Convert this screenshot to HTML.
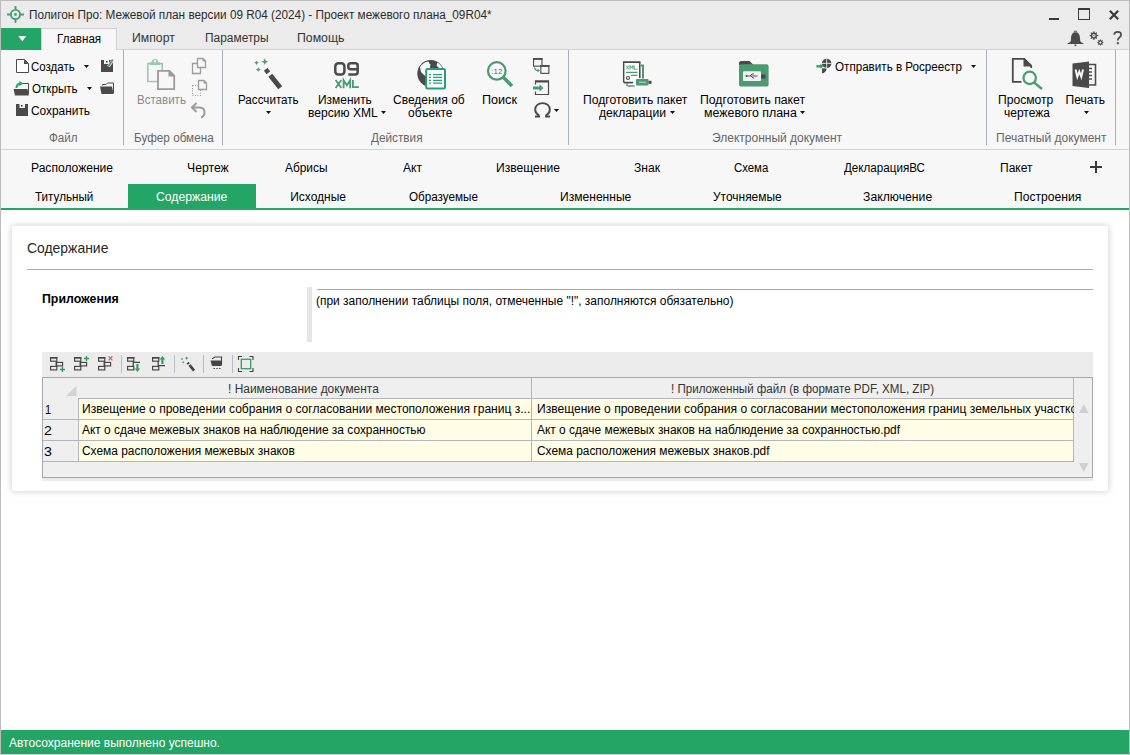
<!DOCTYPE html>
<html><head><meta charset="utf-8">
<style>
*{margin:0;padding:0;box-sizing:border-box}
html,body{width:1130px;height:755px;overflow:hidden;background:#fff}
body{position:relative;font-family:"Liberation Sans",sans-serif;color:#222}
.a{position:absolute}
.t{position:absolute;white-space:nowrap;line-height:1;transform-origin:0 0}
svg{position:absolute;overflow:visible}
.sep{position:absolute;width:1px;background:#aaaeb6;top:50px;height:95px}
</style></head><body>
<!-- title bar -->
<div class="a" style="left:0;top:0;width:1130px;height:49px;background:#ebebeb"></div>
<!-- ribbon body -->
<div class="a" style="left:0;top:49px;width:1130px;height:101px;background:#f7f7f7;border-top:1px solid #d2d2d2;border-bottom:1px solid #d2d2d2"></div>
<!-- nav -->
<div class="a" style="left:0;top:150px;width:1130px;height:58px;background:#f7f7f7"></div>
<div class="a" style="left:128px;top:184px;width:128px;height:24px;background:#23a566"></div>
<div class="a" style="left:0;top:208px;width:1130px;height:2px;background:#23a566"></div>
<!-- status -->
<div class="a" style="left:0;top:730px;width:1130px;height:24px;background:#23a566"></div>
<div class="a" style="left:0;top:754px;width:1130px;height:1px;background:#d6d0d3"></div>

<!-- tab row -->
<div class="a" style="left:1px;top:28px;width:40px;height:22px;background:#23a566"></div>
<svg style="left:18px;top:36px" width="9" height="6"><path d="M0.3 0H8.3L4.3 5.2Z" fill="#fff"/></svg>
<div class="a" style="left:41px;top:28px;width:76px;height:22px;background:#f7f7f7;border:1px solid #d2d2d2;border-bottom:none"></div>

<!-- app icon -->
<svg style="left:7px;top:6px" width="17" height="17" viewBox="0 0 17 17">
 <circle cx="8.5" cy="8.5" r="4.6" fill="none" stroke="#4a9a72" stroke-width="1.8"/>
 <circle cx="8.5" cy="8.5" r="1.4" fill="#4a9a72"/>
 <path d="M8.5 0V4M8.5 13V17M0 8.5H4M13 8.5H17" stroke="#4a9a72" stroke-width="1.8"/>
</svg>
<!-- window controls -->
<div class="a" style="left:1049px;top:18px;width:10px;height:2px;background:#3a3a3a"></div>
<div class="a" style="left:1078px;top:8px;width:12px;height:12px;border:1px solid #3a3a3a;border-top-width:2px"></div>
<svg style="left:1109px;top:10px" width="10" height="10"><path d="M0.8 0.8L9.2 9.2M9.2 0.8L0.8 9.2" stroke="#3a3a3a" stroke-width="2.2"/></svg>
<!-- bell gear help -->
<svg style="left:1067px;top:30px" width="17" height="17" viewBox="0 0 17 17"><path d="M8.5 2.2C5.6 2.2 4.3 4.3 4.1 7.2L3.8 10.8C3.6 12 2.6 12.6 0.6 13.2V14H16.4V13.2C14.4 12.6 13.4 12 13.2 10.8L12.9 7.2C12.7 4.3 11.4 2.2 8.5 2.2Z" fill="#4a4a4a"/><rect x="7.6" y="14.5" width="1.8" height="1.6" fill="#4a4a4a"/><path d="M7.4 2.3V1.2H9.6V2.3" fill="none" stroke="#4a4a4a" stroke-width="0.9"/></svg>
<svg style="left:1088px;top:30px" width="17" height="16" viewBox="0 0 17 16">
 <g fill="#4a4a4a">
 <path d="M5.5 1.2L6.4 1.3L6.6 2.6L7.6 3L8.6 2.2L9.3 2.9L8.5 3.9L8.9 4.9L10.2 5.1V6.1L8.9 6.3L8.5 7.3L9.3 8.3L8.6 9L7.6 8.2L6.6 8.6L6.4 9.9H5.4L5.2 8.6L4.2 8.2L3.2 9L2.5 8.3L3.3 7.3L2.9 6.3L1.6 6.1V5.1L2.9 4.9L3.3 3.9L2.5 2.9L3.2 2.2L4.2 3L5.2 2.6Z"/>
 </g>
 <circle cx="5.9" cy="5.6" r="1.6" fill="#ebebeb"/>
 <circle cx="5.9" cy="5.6" r="0.7" fill="#4a4a4a"/>
 <path d="M12 9.3L12.7 9.4L12.9 10.3L13.6 10.6L14.3 10L14.8 10.5L14.3 11.3L14.5 12L15.4 12.2V12.9L14.5 13.1L14.3 13.8L14.8 14.5L14.3 15L13.6 14.5L12.9 14.8L12.7 15.6H12L11.8 14.8L11.1 14.5L10.4 15L9.9 14.5L10.4 13.8L10.2 13.1L9.3 12.9V12.2L10.2 12L10.4 11.3L9.9 10.5L10.4 10L11.1 10.6L11.8 10.3Z" fill="#4a4a4a"/>
 <circle cx="12.35" cy="12.55" r="1.1" fill="#ebebeb"/>
</svg>
<svg style="left:1113px;top:31px" width="10" height="14"><path d="M1.3 3.8C1.3 2 2.8 0.9 4.7 0.9C6.7 0.9 8.1 2 8.1 3.8C8.1 5.3 7.2 6 6.2 6.7C5.3 7.3 4.8 7.8 4.8 9.2V9.6" fill="none" stroke="#4a4a4a" stroke-width="1.7"/><rect x="3.8" y="11.2" width="2" height="2" fill="#4a4a4a"/></svg>

<!-- ribbon seps -->
<div class="sep" style="left:123px"></div>
<div class="sep" style="left:222px"></div>
<div class="sep" style="left:568px"></div>
<div class="sep" style="left:986px"></div>
<div class="sep" style="left:1115px"></div>

<!-- panel -->
<div class="a" style="left:12px;top:226px;width:1096px;height:265px;background:#fff;border-radius:3px;box-shadow:0 0 6px 1px rgba(0,0,0,0.16)"></div>
<div class="a" style="left:27px;top:269px;width:1066px;height:1px;background:#a9a9a9"></div>
<div class="a" style="left:307px;top:287px;width:5px;height:55px;background:#e6e6e6"></div>
<div class="a" style="left:317px;top:289px;width:776px;height:1px;background:#a9a9a9"></div>

<!-- grid container -->
<div class="a" style="left:42px;top:352px;width:1051px;height:129px;background:#ebebeb"></div>
<div class="a" style="left:42px;top:377px;width:1051px;height:101px;background:#efefef;border:1px solid #a6a6ae"></div>
<div class="a" style="left:78px;top:398px;width:996px;height:64px;background:#fffde6"></div>
<div class="a" style="left:78px;top:398px;width:996px;height:1px;background:#b4b4bc"></div>
<div class="a" style="left:43px;top:419px;width:1031px;height:1px;background:#b4b4bc"></div>
<div class="a" style="left:43px;top:440px;width:1031px;height:1px;background:#b4b4bc"></div>
<div class="a" style="left:43px;top:461px;width:1031px;height:1px;background:#b4b4bc"></div>
<div class="a" style="left:78px;top:398px;width:1px;height:64px;background:#b4b4bc"></div>
<div class="a" style="left:531px;top:378px;width:1px;height:84px;background:#b4b4bc"></div>
<div class="a" style="left:1073px;top:378px;width:1px;height:84px;background:#b4b4bc"></div>
<svg style="left:66px;top:386px" width="11" height="10"><path d="M10.5 0V10H0Z" fill="#d2d2d2"/></svg>


<!-- ===== ribbon icons ===== -->
<!-- new doc -->
<svg style="left:16px;top:59px" width="13" height="14"><path d="M0.5 0.5H8.5L12.5 4.5V13.5H0.5Z" fill="#fff" stroke="#4a4a4a"/><path d="M8 0.5L12.5 5V5H8Z" fill="#4a4a4a"/></svg>
<!-- open folder -->
<svg style="left:13px;top:80px" width="17" height="16"><path d="M9 3.5H15.5V14" fill="none" stroke="#4a4a4a"/><path d="M0.5 9H14.5L15.8 15.5H2Z" fill="#4a4a4a"/><path d="M3.5 8C3.5 5 5 3.5 8 3.5" fill="none" stroke="#23a566" stroke-width="2"/><path d="M6.5 0.8L10 3.5L6.5 6.2Z" fill="#23a566"/></svg>
<!-- save -->
<svg style="left:16px;top:104px" width="12" height="12"><path d="M0 0H12V12H0Z" fill="#4a4a4a"/><path d="M3.5 0H9V4H3.5Z" fill="#f7f7f7"/><rect x="5" y="1" width="1.6" height="1.6" fill="#4a4a4a"/></svg>
<!-- save edit -->
<svg style="left:101px;top:59px" width="13" height="13"><path d="M0 1H12V13H0Z" fill="#4a4a4a"/><path d="M3 1H8V5H3Z" fill="#f7f7f7"/><rect x="5" y="2" width="1.6" height="1.6" fill="#4a4a4a"/><path d="M7.5 7.5L12 0.5" stroke="#f7f7f7" stroke-width="3"/><path d="M7.5 7.3L11.8 0.6" stroke="#4a9a72" stroke-width="1.8"/></svg>
<!-- folder -->
<svg style="left:100px;top:82px" width="15" height="12"><path d="M2.5 3.5V2.5H6L7.5 1H13.5V11" fill="none" stroke="#4a4a4a" stroke-width="1"/><path d="M0 4.5H12L13.6 12H1.5Z" fill="#4a4a4a"/></svg>
<!-- dropdown arrows -->
<svg style="left:84px;top:65px" width="5" height="3"><path d="M0 0H5L2.5 3Z" fill="#111"/></svg>
<svg style="left:87px;top:87px" width="5" height="3"><path d="M0 0H5L2.5 3Z" fill="#111"/></svg>
<svg style="left:266px;top:111px" width="5" height="3"><path d="M0 0H5L2.5 3Z" fill="#111"/></svg>
<svg style="left:381px;top:111px" width="5" height="3"><path d="M0 0H5L2.5 3Z" fill="#111"/></svg>
<svg style="left:554px;top:109px" width="5" height="3"><path d="M0 0H5L2.5 3Z" fill="#111"/></svg>
<svg style="left:670px;top:111px" width="5" height="3"><path d="M0 0H5L2.5 3Z" fill="#111"/></svg>
<svg style="left:800px;top:111px" width="5" height="3"><path d="M0 0H5L2.5 3Z" fill="#111"/></svg>
<svg style="left:971px;top:65px" width="5" height="3"><path d="M0 0H5L2.5 3Z" fill="#111"/></svg>
<svg style="left:1084px;top:111px" width="5" height="3"><path d="M0 0H5L2.5 3Z" fill="#111"/></svg>

<!-- paste -->
<svg style="left:146px;top:57px" width="31" height="34">
 <path d="M1.8 6.5H16.2V24.5H1.8Z" fill="none" stroke="#9cc9ae" stroke-width="1.6"/>
 <path d="M3.6 8V6.2C3.6 5.6 4 5.2 4.6 5.2H5.8A3.2 3.2 0 0 1 12.2 5.2H13.4C14 5.2 14.4 5.6 14.4 6.2V8Z" fill="#9cc9ae"/>
 <circle cx="9" cy="4.3" r="1.2" fill="#f7f7f7"/>
 <path d="M12 13.9H23.5L28.2 18.6V32.1H12Z" fill="#f7f7f7" stroke="#9b9b9b" stroke-width="1.8"/>
 <path d="M22.5 13L29 19.5H22.5Z" fill="#9b9b9b"/>
</svg>
<!-- copy -->
<svg style="left:191px;top:57px" width="16" height="18">
 <path d="M1.5 6.5H9.5V16.5H1.5Z" fill="none" stroke="#9b9b9b" stroke-width="1.3"/>
 <path d="M6.5 1.5H12L14.5 4V10.5H6.5Z" fill="#f7f7f7" stroke="#9b9b9b" stroke-width="1.3"/>
 <path d="M11.5 1L15 4.5H11.5Z" fill="#9b9b9b"/>
</svg>
<!-- cut dotted -->
<svg style="left:191px;top:79px" width="17" height="18">
 <path d="M1.5 6.5H9.5V16.5H1.5Z" fill="none" stroke="#9b9b9b" stroke-width="1.1" stroke-dasharray="1 1.5"/>
 <path d="M7.5 1.5H13L15.5 4V10.5H7.5Z" fill="#f7f7f7" stroke="#9b9b9b" stroke-width="1.3"/>
 <path d="M12.5 1L16 4.5H12.5Z" fill="#9b9b9b"/>
</svg>
<!-- undo -->
<svg style="left:190px;top:101px" width="18" height="18">
 <path d="M3 6.5H9.5C12.5 6.5 14.5 8.5 14.5 11.5C14.5 14 13 15.8 11 16.5" fill="none" stroke="#9b9b9b" stroke-width="2"/>
 <path d="M6.5 2L2 6.5L6.5 11" fill="none" stroke="#9b9b9b" stroke-width="2"/>
</svg>

<!-- magic wand -->
<svg style="left:252px;top:57px" width="32" height="34">
 <path d="M12.8 1.3L13.8 3.7L16.2 4.7L13.8 5.7L12.8 8.1L11.8 5.7L9.4 4.7L11.8 3.7Z" fill="#4a9a72"/>
 <path d="M4.5 3.4L5.3 5L6.9 5.8L5.3 6.6L4.5 8.2L3.7 6.6L2.1 5.8L3.7 5Z" fill="#4a9a72"/>
 <path d="M6.3 10.2L7.1 11.8L8.7 12.6L7.1 13.4L6.3 15L5.5 13.4L3.9 12.6L5.5 11.8Z" fill="#4a9a72"/>
 <path d="M13.6 12.4L16.4 15.8" stroke="#4a4a4a" stroke-width="4.6"/>
 <path d="M18.3 18.3L28.2 30.8" stroke="#4a4a4a" stroke-width="5"/>
</svg>
<!-- 09 XML -->
<svg style="left:334px;top:62px" width="26" height="27">
 <rect x="1.3" y="1.3" width="9.1" height="11.2" rx="3" fill="none" stroke="#4a4a4a" stroke-width="2.5"/>
 <path d="M23.7 7.3H16.8C15.1 7.3 14.3 6.5 14.3 4.8V3.8C14.3 2.1 15.1 1.3 16.8 1.3H21.2C22.9 1.3 23.7 2.1 23.7 3.8V10C23.7 11.7 22.9 12.5 21.2 12.5H14.3" fill="none" stroke="#4a4a4a" stroke-width="2.5"/>
 <path d="M1.6 17.9L7.4 26M7.4 17.9L1.6 26M9.6 26.2V18.2L12.9 23.4L16.2 18.2V26.2M18.9 17.9V25.2H24.9" fill="none" stroke="#4a9a72" stroke-width="1.8"/>
</svg>
<!-- globe + doc -->
<svg style="left:416px;top:59px" width="31" height="32">
 <circle cx="14.7" cy="14.5" r="13.4" fill="#4a4a4a"/>
 <path d="M4 8C6 4.5 9 2.8 12.5 2.4L13.2 4.2L14.5 5.5L13.8 8L15 10L13.5 12.5L11.5 14L10 17.5L8 16L5 13Z" fill="#f7f7f7"/>
 <path d="M21.5 3.5C24 5 26 7.5 26.8 10L24 10.2L22.5 8.5L20.5 6.5Z" fill="#f7f7f7"/>
 <rect x="10.2" y="10" width="18.8" height="19.6" rx="1.5" fill="#fff" stroke="#23a07a" stroke-width="2"/>
 <path d="M13 15.6H15M17 15.6H26M13 18.4H15M17 18.4H26M13 21.3H15M17 21.3H26M13 24.1H15M17 24.1H26" stroke="#23a07a" stroke-width="1.3"/>
</svg>
<!-- search :12 -->
<svg style="left:486px;top:60px" width="28" height="28">
 <circle cx="10.8" cy="10.9" r="8.8" fill="none" stroke="#4a9a72" stroke-width="2.2"/>
 <path d="M17 17L26 26" stroke="#4a9a72" stroke-width="3.6"/>
 <text x="10.8" y="13.8" font-size="8" font-family="Liberation Sans" fill="#666" text-anchor="middle">:12</text>
</svg>
<!-- small icons right of search -->
<svg style="left:533px;top:58px" width="17" height="17">
 <rect x="0.55" y="0.55" width="8.4" height="7.6" fill="none" stroke="#4a4a4a" stroke-width="1.1"/>
 <rect x="0" y="0" width="9.5" height="1.9" fill="#4a4a4a"/>
 <rect x="7.3" y="7.3" width="9" height="8.6" fill="#f7f7f7"/>
 <rect x="7.85" y="7.55" width="8" height="7.8" fill="none" stroke="#4a4a4a" stroke-width="1.1"/>
 <rect x="7.3" y="7" width="9.1" height="1.9" fill="#4a4a4a"/>
 <path d="M1.6 9.5C1.8 11.6 3 12.6 5 12.6" fill="none" stroke="#4a9a72" stroke-width="1.3"/>
 <path d="M4.6 10.6L6.8 12.6L4.6 14.6Z" fill="#4a9a72"/>
</svg>
<svg style="left:533px;top:80px" width="17" height="16">
 <path d="M2.5 4.5V1H15.5V14.5H2.5V11.5" fill="none" stroke="#4a4a4a" stroke-width="1.2"/>
 <rect x="2" y="0.5" width="14" height="2" fill="#4a4a4a"/>
 <path d="M0 6.5H6.5V4.2L10.5 8L6.5 11.8V9.5H0Z" fill="#4a9a72"/>
</svg>
<svg style="left:534px;top:102px" width="18" height="16">
 <path d="M4.6 14.6V13C2.4 11.8 1.2 9.8 1.2 7.4C1.2 3.7 4.3 1.1 8.5 1.1C12.7 1.1 15.8 3.7 15.8 7.4C15.8 9.8 14.6 11.8 12.4 13V14.6" fill="none" stroke="#4a4a4a" stroke-width="1.9"/>
 <path d="M1 14.6H6M11 14.6H16" stroke="#4a4a4a" stroke-width="2"/>
</svg>

<!-- xml package -->
<svg style="left:622px;top:60px" width="31" height="28">
 <path d="M19 5.5H21V18.5" fill="none" stroke="#4a9a72" stroke-width="2"/>
 <path d="M5.5 26H12.5" stroke="#4a9a72" stroke-width="1.5"/>
 <path d="M5 23.5V26" stroke="#4a9a72" stroke-width="1.5"/>
 <path d="M1.8 22.6V2.2H17.7V18" fill="none" stroke="#4a4a4a" stroke-width="1.7"/><rect x="2.6" y="3" width="14.3" height="18.8" fill="#fff"/>
 <path d="M1.8 22.6H11" stroke="#4a4a4a" stroke-width="1.7"/>
 <path d="M4 5.5L7 9.5M7 5.5L4 9.5M8 9.5V5.5L9.5 8L11 5.5V9.5M12.2 5.5V9.2H15.5" fill="none" stroke="#4a9a72" stroke-width="0.9"/>
 <path d="M4 12.3H15.5M9 15.3H15.5" stroke="#4a9a72" stroke-width="1.3"/>
 <circle cx="6" cy="18" r="1.5" fill="none" stroke="#4a4a4a" stroke-width="1.1"/>
 <rect x="14" y="19" width="12.5" height="6.5" rx="1" fill="#4a9a72"/>
 <rect x="26.5" y="20.8" width="3" height="3" fill="#4a4a4a"/>
 <path d="M17 22.2H24" stroke="#e6f2ec" stroke-width="0.8"/>
</svg>
<!-- folder usb -->
<svg style="left:739px;top:61px" width="31" height="27">
 <path d="M0 3V2C0 1 1 0 2 0H10.5L14.5 4H0Z" fill="#4a4a4a"/>
 <rect x="0" y="3.3" width="29.6" height="22.3" rx="2.2" fill="#4a9a72"/>
 <rect x="4" y="10.2" width="18" height="9.8" rx="1" fill="#f0f0f0"/>
 <rect x="22" y="13.5" width="4.5" height="4" fill="#4a4a4a"/>
 <path d="M7.5 15H18.5M11 15L13 13H15M12 15L14 17H15" fill="none" stroke="#4a4a4a" stroke-width="0.9"/>
 <circle cx="7.5" cy="15" r="1" fill="#4a4a4a"/>
</svg>
<!-- send rosreestr -->
<svg style="left:816px;top:58px" width="17" height="16">
 <circle cx="10.7" cy="5.4" r="4.7" fill="#4a4a4a"/>
 <path d="M6 10H10.6A4.6 5.2 0 0 1 6 15.2Z" fill="#4a4a4a"/>
 <path d="M10.7 0V10.4M5.5 5.4H15.8M5.5 10H11" stroke="#e8e8e8" stroke-width="0.9"/>
 <path d="M0.4 8.3H5" stroke="#3f9a6a" stroke-width="2.4"/>
 <path d="M4.4 5.8L7.6 8.3L4.4 10.8Z" fill="#3f9a6a"/>
</svg>
<!-- print preview -->
<svg style="left:1011px;top:57px" width="33" height="34">
 <path d="M10.5 24.8H1.8V1.8H13.3L20.2 8.7V11" fill="none" stroke="#4a4a4a" stroke-width="1.8"/>
 <path d="M12.5 1.5L20.5 9.5H12.5Z" fill="#4a4a4a"/>
 <circle cx="18.7" cy="20.9" r="6.2" fill="#f7f7f7" stroke="#4a9a72" stroke-width="2.2"/>
 <path d="M23 25.3L31 32" stroke="#4a9a72" stroke-width="2.4"/>
</svg>
<!-- word print -->
<svg style="left:1072px;top:61px" width="26" height="28">
 <path d="M0.5 2.5L17 0.5V27L0.5 25Z" fill="#4a4a4a"/>
 <path d="M17 3.5H23.5V24H17" fill="none" stroke="#4a4a4a" stroke-width="1.6"/>
 <path d="M17 7.5H20M17 11H20M17 14.5H20M17 18H20" stroke="#4a4a4a" stroke-width="1.3"/>
 <path d="M3.6 8.5L5.3 16L7.3 10.5L9.3 16L11 8.5" fill="none" stroke="#fff" stroke-width="1.9"/>
</svg>


<!-- ===== grid toolbar icons ===== -->
<svg style="left:49px;top:356px" width="18" height="17">
 <rect x="1.6" y="1.6" width="6.2" height="3.6" fill="none" stroke="#444" stroke-width="1.15"/><rect x="1" y="1" width="7.4" height="1.6" fill="#444"/>
 <rect x="7.6" y="6.4" width="6" height="3.5" fill="none" stroke="#444" stroke-width="1.15"/>
 <rect x="1.6" y="10.4" width="6.2" height="3.5" fill="none" stroke="#444" stroke-width="1.15"/>
 <path d="M7.2 5V11" stroke="#444" stroke-width="1.2"/>
 <path d="M13.4 11V16M10.9 13.5H15.9" stroke="#2e9a5e" stroke-width="1.4"/>
</svg>
<svg style="left:73px;top:355px" width="18" height="17">
 <rect x="1.6" y="2.6" width="6.2" height="3.6" fill="none" stroke="#444" stroke-width="1.15"/><rect x="1" y="2" width="7.4" height="1.6" fill="#444"/>
 <rect x="7.6" y="7.4" width="6" height="3.5" fill="none" stroke="#444" stroke-width="1.15"/>
 <rect x="1.6" y="11.4" width="6.2" height="3.5" fill="none" stroke="#444" stroke-width="1.15"/>
 <path d="M7.2 6V12" stroke="#444" stroke-width="1.2"/>
 <path d="M13.5 1V6M11 3.5H16" stroke="#2e9a5e" stroke-width="1.4"/>
</svg>
<svg style="left:97px;top:355px" width="18" height="17">
 <rect x="1.6" y="2.6" width="6.2" height="3.6" fill="none" stroke="#444" stroke-width="1.15"/><rect x="1" y="2" width="7.4" height="1.6" fill="#444"/>
 <rect x="7.6" y="7.4" width="6" height="3.5" fill="none" stroke="#444" stroke-width="1.15"/>
 <rect x="1.6" y="11.4" width="6.2" height="3.5" fill="none" stroke="#444" stroke-width="1.15"/>
 <path d="M7.2 6V12" stroke="#444" stroke-width="1.2"/>
 <path d="M11.6 1.4L15.4 5.4M15.4 1.4L11.6 5.4" stroke="#c06a55" stroke-width="1.3"/>
</svg>
<div class="a" style="left:121px;top:355px;width:1px;height:18px;background:#b4bcc8"></div>
<svg style="left:126px;top:356px" width="16" height="17">
 <rect x="1.6" y="1.6" width="6.2" height="3.6" fill="none" stroke="#444" stroke-width="1.15"/><rect x="1" y="1" width="7.4" height="1.6" fill="#444"/>
 <rect x="1.6" y="10.4" width="6.2" height="3.5" fill="none" stroke="#444" stroke-width="1.15"/>
 <path d="M7.2 5V11M7.2 6.3H14" stroke="#444" stroke-width="1.2"/>
 <path d="M10.3 8V12.5H8.6L11.4 16L14.2 12.5H12.5V8Z" fill="#3a9a6a"/>
</svg>
<svg style="left:151px;top:355px" width="16" height="17">
 <rect x="1.6" y="2.6" width="6.2" height="3.6" fill="none" stroke="#444" stroke-width="1.15"/><rect x="1" y="2" width="7.4" height="1.6" fill="#444"/>
 <rect x="1.6" y="11.4" width="6.2" height="3.5" fill="none" stroke="#444" stroke-width="1.15"/>
 <path d="M7.2 6V12M7.2 10.6H14" stroke="#444" stroke-width="1.2"/>
 <path d="M10.3 9V4.5H8.6L11.4 1L14.2 4.5H12.5V9Z" fill="#3a9a6a"/>
</svg>
<div class="a" style="left:174px;top:355px;width:1px;height:18px;background:#b4bcc8"></div>
<svg style="left:180px;top:356px" width="16" height="17">
 <path d="M6.6 0.3L7.2 1.5L8.4 2.1L7.2 2.7L6.6 3.9L6 2.7L4.8 2.1L6 1.5Z" fill="#4a9a72"/>
 <path d="M2 1.6L2.5 2.4L3.3 2.9L2.5 3.4L2 4.2L1.5 3.4L0.7 2.9L1.5 2.4Z" fill="#4a9a72"/>
 <path d="M3.2 4.9L3.7 5.7L4.5 6.2L3.7 6.7L3.2 7.5L2.7 6.7L1.9 6.2L2.7 5.7Z" fill="#4a9a72"/>
 <path d="M7.6 6.6L8.8 8" stroke="#444" stroke-width="2.6"/>
 <path d="M9.6 9L14 14.6" stroke="#444" stroke-width="2.8"/>
</svg>
<div class="a" style="left:203px;top:355px;width:1px;height:18px;background:#b4bcc8"></div>
<svg style="left:210px;top:356px" width="13" height="14">
 <path d="M2.5 3V2.5L5 1H11.5V9" fill="none" stroke="#444" stroke-width="1.1"/>
 <path d="M0.5 4.5H11.5V10H2Z" fill="#444"/>
 <path d="M3.5 12.5H5M6.3 12.5H7.8M9.1 12.5H10.6" stroke="#444" stroke-width="1"/>
</svg>
<div class="a" style="left:232px;top:355px;width:1px;height:18px;background:#b4bcc8"></div>
<svg style="left:237px;top:355px" width="18" height="18">
 <path d="M1.5 5V1.5H5M12.5 1.5H16V5M16 13V16.5H12.5M5 16.5H1.5V13" fill="none" stroke="#444" stroke-width="1.15"/>
 <rect x="4.3" y="4.3" width="9.4" height="9.4" fill="none" stroke="#3a9a6a" stroke-width="1.3"/>
</svg>

<svg style="left:1090px;top:161px" width="12" height="12"><path d="M6 0V12M0 6H12" stroke="#3a3a3a" stroke-width="2"/></svg>
<div class="t" style="left:28.82px;top:9.00px;font-size:12px;color:#2b2b2b;font-weight:400;transform:scaleX(0.9803)">Полигон Про: Межевой план версии 09 R04 (2024) - Проект межевого плана_09R04*</div>
<div class="t" style="left:56.73px;top:33.00px;font-size:12px;color:#000;font-weight:400;transform:scaleX(0.9659)">Главная</div>
<div class="t" style="left:131.68px;top:32.00px;font-size:12px;color:#333;font-weight:400;transform:scaleX(1.0195)">Импорт</div>
<div class="t" style="left:204.71px;top:32.00px;font-size:12px;color:#333;font-weight:400;transform:scaleX(0.9935)">Параметры</div>
<div class="t" style="left:297.38px;top:32.00px;font-size:12px;color:#333;font-weight:400;transform:scaleX(1.0222)">Помощь</div>
<div class="t" style="left:31.04px;top:61.00px;font-size:12px;color:#000;font-weight:400;transform:scaleX(0.9591)">Создать</div>
<div class="t" style="left:32.00px;top:83.00px;font-size:12px;color:#000;font-weight:400;transform:scaleX(0.9681)">Открыть</div>
<div class="t" style="left:31.01px;top:105.00px;font-size:12px;color:#000;font-weight:400;transform:scaleX(0.9897)">Сохранить</div>
<div class="t" style="left:48.73px;top:131.50px;font-size:12px;color:#666;font-weight:400;transform:scaleX(0.9679)">Файл</div>
<div class="t" style="left:136.94px;top:94.00px;font-size:12px;color:#8a8a8a;font-weight:400;transform:scaleX(0.9612)">Вставить</div>
<div class="t" style="left:133.62px;top:131.50px;font-size:12px;color:#666;font-weight:400;transform:scaleX(0.9775)">Буфер обмена</div>
<div class="t" style="left:237.53px;top:94.00px;font-size:12px;color:#000;font-weight:400;transform:scaleX(0.9689)">Рассчитать</div>
<div class="t" style="left:318.01px;top:94.00px;font-size:12px;color:#000;font-weight:400;transform:scaleX(0.9943)">Изменить</div>
<div class="t" style="left:307.59px;top:107.00px;font-size:12px;color:#000;font-weight:400;transform:scaleX(1.0059)">версию XML</div>
<div class="t" style="left:393.00px;top:94.00px;font-size:12px;color:#000;font-weight:400;transform:scaleX(1.0000)">Сведения об</div>
<div class="t" style="left:407.70px;top:107.00px;font-size:12px;color:#000;font-weight:400;transform:scaleX(0.9932)">объекте</div>
<div class="t" style="left:482.35px;top:94.00px;font-size:12px;color:#000;font-weight:400;transform:scaleX(1.0500)">Поиск</div>
<div class="t" style="left:371.00px;top:131.50px;font-size:12px;color:#666;font-weight:400;transform:scaleX(0.9808)">Действия</div>
<div class="t" style="left:583.49px;top:94.00px;font-size:12px;color:#000;font-weight:400;transform:scaleX(1.0127)">Подготовить пакет</div>
<div class="t" style="left:599.00px;top:107.00px;font-size:12px;color:#000;font-weight:400;transform:scaleX(1.0106)">декларации</div>
<div class="t" style="left:699.98px;top:94.00px;font-size:12px;color:#000;font-weight:400;transform:scaleX(1.0196)">Подготовить пакет</div>
<div class="t" style="left:704.47px;top:107.00px;font-size:12px;color:#000;font-weight:400;transform:scaleX(1.0315)">межевого плана</div>
<div class="t" style="left:834.50px;top:61.40px;font-size:12px;color:#000;font-weight:400;transform:scaleX(0.9695)">Отправить в Росреестр</div>
<div class="t" style="left:712.00px;top:131.50px;font-size:12px;color:#666;font-weight:400;transform:scaleX(1.0000)">Электронный документ</div>
<div class="t" style="left:998.49px;top:94.00px;font-size:12px;color:#000;font-weight:400;transform:scaleX(1.0093)">Просмотр</div>
<div class="t" style="left:1004.00px;top:107.00px;font-size:12px;color:#000;font-weight:400;transform:scaleX(1.0000)">чертежа</div>
<div class="t" style="left:1065.60px;top:94.00px;font-size:12px;color:#000;font-weight:400;transform:scaleX(1.0000)">Печать</div>
<div class="t" style="left:995.60px;top:131.50px;font-size:12px;color:#666;font-weight:400;transform:scaleX(1.0018)">Печатный документ</div>
<div class="t" style="left:31.19px;top:162.30px;font-size:12px;color:#000;font-weight:400;transform:scaleX(1.0063)">Расположение</div>
<div class="t" style="left:187.28px;top:162.30px;font-size:12px;color:#000;font-weight:400;transform:scaleX(1.0175)">Чертеж</div>
<div class="t" style="left:285.40px;top:162.30px;font-size:12px;color:#000;font-weight:400;transform:scaleX(0.9905)">Абрисы</div>
<div class="t" style="left:402.70px;top:162.30px;font-size:12px;color:#000;font-weight:400;transform:scaleX(1.0053)">Акт</div>
<div class="t" style="left:496.49px;top:162.30px;font-size:12px;color:#000;font-weight:400;transform:scaleX(1.0081)">Извещение</div>
<div class="t" style="left:633.99px;top:162.30px;font-size:12px;color:#000;font-weight:400;transform:scaleX(1.0080)">Знак</div>
<div class="t" style="left:734.05px;top:162.30px;font-size:12px;color:#000;font-weight:400;transform:scaleX(0.9486)">Схема</div>
<div class="t" style="left:843.80px;top:162.30px;font-size:12px;color:#000;font-weight:400;transform:scaleX(0.9687)">ДекларацияВС</div>
<div class="t" style="left:999.70px;top:162.30px;font-size:12px;color:#000;font-weight:400;transform:scaleX(1.0032)">Пакет</div>
<div class="t" style="left:35.40px;top:191.00px;font-size:12px;color:#000;font-weight:400;transform:scaleX(0.9700)">Титульный</div>
<div class="t" style="left:155.58px;top:191.00px;font-size:12px;color:#fff;font-weight:400;transform:scaleX(1.0159)">Содержание</div>
<div class="t" style="left:290.20px;top:191.00px;font-size:12px;color:#000;font-weight:400;transform:scaleX(1.0000)">Исходные</div>
<div class="t" style="left:409.40px;top:191.00px;font-size:12px;color:#000;font-weight:400;transform:scaleX(0.9718)">Образуемые</div>
<div class="t" style="left:560.09px;top:191.00px;font-size:12px;color:#000;font-weight:400;transform:scaleX(1.0057)">Измененные</div>
<div class="t" style="left:712.80px;top:191.00px;font-size:12px;color:#000;font-weight:400;transform:scaleX(0.9956)">Уточняемые</div>
<div class="t" style="left:863.48px;top:191.00px;font-size:12px;color:#000;font-weight:400;transform:scaleX(1.0179)">Заключение</div>
<div class="t" style="left:1014.29px;top:191.00px;font-size:12px;color:#000;font-weight:400;transform:scaleX(1.0092)">Построения</div>
<div class="t" style="left:26.94px;top:241.00px;font-size:14.5px;color:#262626;font-weight:400;transform:scaleX(0.9602)">Содержание</div>
<div class="t" style="left:41.97px;top:293.00px;font-size:12px;color:#000;font-weight:700;transform:scaleX(1.0274)">Приложения</div>
<div class="t" style="left:316.40px;top:295.00px;font-size:12px;color:#000;font-weight:400;transform:scaleX(0.9969)">(при заполнении таблицы поля, отмеченные &quot;!&quot;, заполняются обязательно)</div>
<div class="t" style="left:228.21px;top:383.00px;font-size:12px;color:#333;font-weight:400;transform:scaleX(0.9940)">! Наименование документа</div>
<div class="t" style="left:670.94px;top:383.00px;font-size:12px;color:#333;font-weight:400;transform:scaleX(0.9646)">! Приложенный файл (в формате PDF, XML, ZIP)</div>
<div class="t" style="left:44.88px;top:404.00px;font-size:12px;color:#000;font-weight:400;transform:scaleX(0.9200)">1</div>
<div class="t" style="left:44.12px;top:425.00px;font-size:12px;color:#000;font-weight:400;transform:scaleX(1.1800)">2</div>
<div class="t" style="left:44.12px;top:446.00px;font-size:12px;color:#000;font-weight:400;transform:scaleX(1.1800)">3</div>
<div class="t" style="left:81.50px;top:403.00px;font-size:12px;color:#000;font-weight:400;transform:scaleX(1.0043)">Извещение о проведении собрания о согласовании местоположения границ з...</div>
<div class="t" style="left:81.70px;top:424.00px;font-size:12px;color:#000;font-weight:400;transform:scaleX(0.9942)">Акт о сдаче межевых знаков на наблюдение за сохранностью</div>
<div class="t" style="left:81.51px;top:445.30px;font-size:12px;color:#000;font-weight:400;transform:scaleX(0.9930)">Схема расположения межевых знаков</div>
<div class="t" style="left:536.60px;top:403.00px;font-size:12px;color:#000;font-weight:400;transform:scaleX(1.0043)">Извещение о проведении собрания о согласовании местоположения границ земельных участков</div>
<div class="t" style="left:536.80px;top:424.00px;font-size:12px;color:#000;font-weight:400;transform:scaleX(0.9932)">Акт о сдаче межевых знаков на наблюдение за сохранностью.pdf</div>
<div class="t" style="left:536.61px;top:445.30px;font-size:12px;color:#000;font-weight:400;transform:scaleX(0.9923)">Схема расположения межевых знаков.pdf</div>
<div class="t" style="left:9.00px;top:737.00px;font-size:12px;color:#fff;font-weight:400;transform:scaleX(1.0000)">Автосохранение выполнено успешно.</div>

<!-- scrollbar overlay -->
<div class="a" style="left:1074px;top:378px;width:18px;height:99px;background:#efefef"></div>
<svg style="left:1079px;top:404px" width="10" height="9"><path d="M0 9H9.5L4.75 0Z" fill="#cfcfcf"/></svg>
<svg style="left:1079px;top:463px" width="10" height="9"><path d="M0 0H9.5L4.75 9Z" fill="#cfcfcf"/></svg>

<!-- window border -->
<div class="a" style="left:0;top:0;width:1px;height:755px;background:#bcbcbc"></div>
<div class="a" style="left:1129px;top:0;width:1px;height:755px;background:#bcbcbc"></div>
<div class="a" style="left:0;top:0;width:1130px;height:1px;background:#bcbcbc"></div>
</body></html>
